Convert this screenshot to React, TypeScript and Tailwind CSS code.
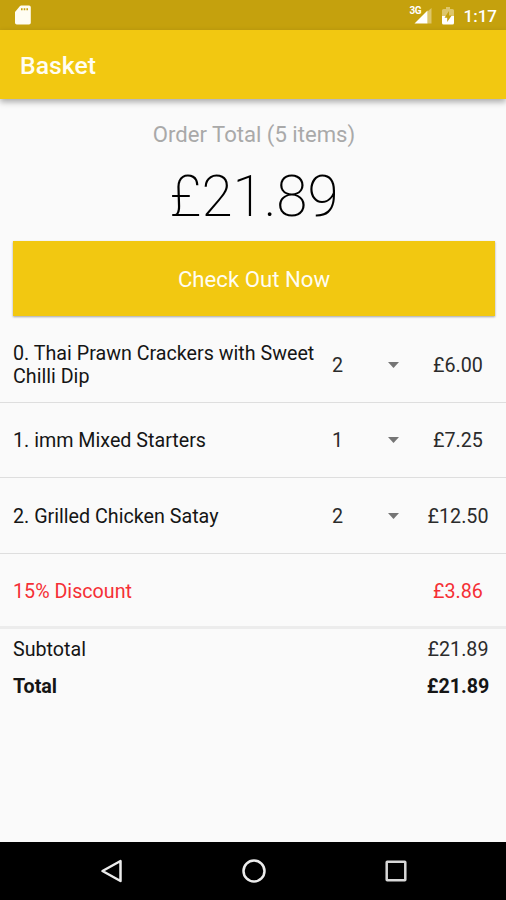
const items = [
	{ id: 0, name: "Thai Prawn Crackers with Sweet Chilli Dip", quantity: 2, price: "£6.00" },
	{ id: 1, name: "imm Mixed Starters", quantity: 1, price: "£7.25" },
	{ id: 2, name: "Grilled Chicken Satay", quantity: 2, price: "£12.50" },
];

function StatusBar() {
	return (
		<div className="flex h-[30px] shrink-0 items-center justify-between bg-[#c5a10d] pl-[15px] pr-[9px] text-white">
			<svg width="16" height="20" viewBox="0 0 16 20" aria-hidden="true">
				<path
					fill="#fffdf3"
					fillRule="evenodd"
					d="M6.2.5H14a1.8 1.8 0 0 1 1.8 1.8v15.4a1.8 1.8 0 0 1-1.8 1.8H1.8A1.8 1.8 0 0 1 0 17.7V7L5 1.1Q5.5.5 6.2.5ZM6 3.2V5.2h1.6V3.2ZM8.7 3.2V5.2h1.6V3.2ZM11.4 3.2V5.2H13V3.2Z"
				/>
			</svg>
			<div className="flex items-center">
				<div className="relative mr-[10px] h-[18px] w-[22px]">
					<svg className="h-full w-full" viewBox="0 0 22 18" aria-hidden="true">
						<path fill="#ddc66b" d="M17.5 5.5 21.5 2v15.5h-4Z" />
						<path fill="#fff" d="M4.500 17.5 17.5 4.500v13Z" />
					</svg>
					<span className="absolute left-0 top-0 text-[10px] font-bold leading-[10px] tracking-[-0.5px]">3G</span>
				</div>
				<svg className="mr-[10px]" width="12" height="19" viewBox="0 0 12 19" aria-hidden="true">
					<path fill="#ddc66b" d="M4 1h4v2h2.5Q12 3 12 4.500V10H0V4.500Q0 3 1.5 3H4Z" />
					<path fill="#fff" d="M0 10h12v7q0 1.5-1.5 1.5h-9Q0 18.500 0 17Z" />
					<path fill="#c5a10d" d="M7 5 2.500 11.700h2.700V16l4.500-6.500H7Z" />
				</svg>
				<span className="pt-[2px] text-[17px] font-medium leading-none">1:17</span>
			</div>
		</div>
	);
}

function BasketItem({ id, name, quantity, price }: (typeof items)[number]) {
	return (
		<li className="flex h-[75.5px] items-center border-b-[1.5px] border-[#dedede] pl-[13px] pt-[2px]">
			<span className="w-[319px] pr-2 pt-px leading-[22.5px]">
				{`${id}. ${name}`}
			</span>
			<span className="w-[56px] pt-px text-[#2b2b2b]">{quantity}</span>
			<svg className="mb-px" width="11" height="6" viewBox="0 0 11 6" aria-hidden="true">
				<path fill="#757575" d="M0 0h11L5.5 6Z" />
			</svg>
			<span className="ml-[18px] w-[82px] pt-px text-center text-[#2b2b2b]">{price}</span>
		</li>
	);
}

function NavigationBar() {
	return (
		<nav className="flex h-[58px] shrink-0 items-center justify-between bg-black pl-[100px] pr-[98px]">
			<svg width="24" height="26" viewBox="0 0 24 26" fill="none" stroke="#ececec" strokeWidth="2.5" strokeLinejoin="round">
				<path d="M2.5 13 20.5 3v20Z" />
			</svg>
			<svg width="26" height="26" viewBox="0 0 26 26" fill="none" stroke="#ececec" strokeWidth="2.5">
				<circle cx="13" cy="13" r="10.5" />
			</svg>
			<svg width="24" height="24" viewBox="0 0 24 24" fill="none" stroke="#d8d8d8" strokeWidth="2.5">
				<rect x="2.7" y="2.7" width="18.6" height="18.6" rx="0.5" />
			</svg>
		</nav>
	);
}

export default function App() {
	return (
		<div className="flex h-[900px] w-[506px] flex-col overflow-hidden bg-[#fafafa] font-['Roboto',sans-serif] text-[19.7px] text-[#151515]">
			<StatusBar />
			<header className="z-10 flex h-[69px] shrink-0 items-center bg-[#f2c811] pl-5 pt-[3px] shadow-[0_3px_6px_rgba(0,0,0,0.32)]">
				<h1 className="text-[24.8px] font-medium leading-none text-[#fffdf3]">Basket</h1>
			</header>

			<main className="flex-1">
				<section className="flex flex-col items-center pl-[13px] pr-[11px] pt-[22px]">
					<h2 className="text-[22.1px] leading-[27px] text-[#a9a9a9]">Order Total (5 items)</h2>
					<p className="mt-[14px] text-[56.5px] font-extralight leading-[70px] text-black">£21.89</p>
					<button className="mt-[9px] h-[75px] w-[482px] bg-[#f2c811] pt-[2px] text-[22.2px] text-[#fffdf3] shadow-[0_1px_2px_rgba(0,0,0,0.35)]">
						Check Out Now
					</button>
				</section>

				<ul className="mt-[11px]">
					{items.map((item) => (
						<BasketItem key={item.id} {...item} />
					))}
					<li className="flex h-[75.5px] items-center justify-between border-b-[3px] border-[#ececec] pl-[13px] pr-[7px] pt-[4px] text-[#f52f35]">
						<span>15% Discount</span>
						<span className="w-[82px] text-center">£3.86</span>
					</li>
				</ul>

				<div className="flex h-[39px] items-center justify-between pl-[13px] pr-[7px] pt-[2px]">
					<span>Subtotal</span>
					<span className="w-[82px] text-center text-[#2b2b2b]">£21.89</span>
				</div>
				<div className="flex h-[36px] items-center justify-between pl-[13px] pr-[7px] pt-px font-bold">
					<span>Total</span>
					<span className="w-[82px] text-center">£21.89</span>
				</div>
			</main>

			<NavigationBar />
		</div>
	);
}
